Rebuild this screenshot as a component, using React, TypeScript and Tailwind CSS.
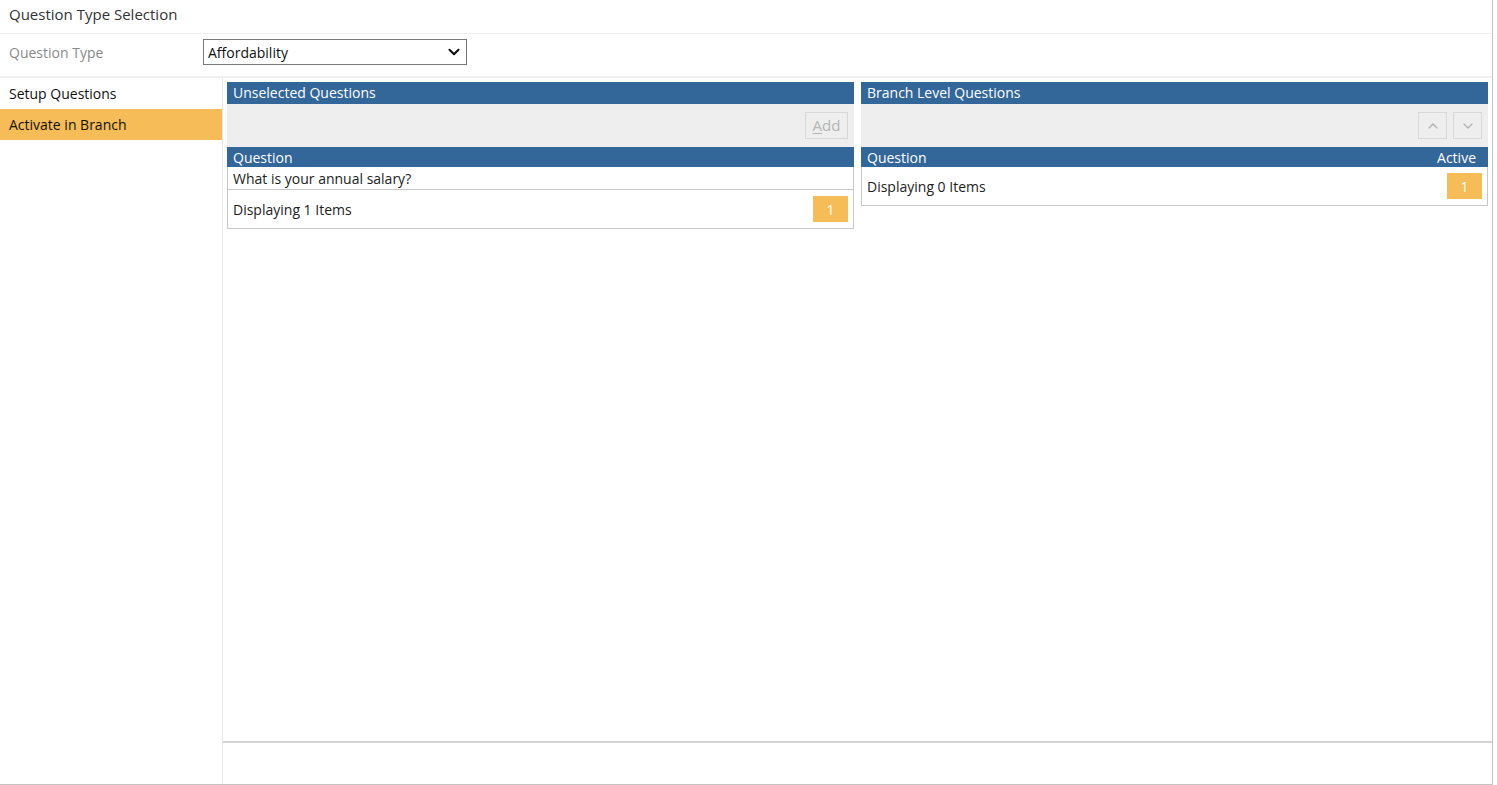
import { ChevronDown, ChevronUp } from "lucide-react";

const font = { fontFamily: '"Segoe UI", "Open Sans", "Noto Sans", sans-serif' };

function PanelHeader({ title }: { title: string }) {
  return (
    <div className="h-[22px] bg-[#336699] text-white text-[14px] pl-[6px] flex items-center leading-none">
      {title}
    </div>
  );
}

function Pager() {
  return (
    <div className="w-[35px] h-[26px] bg-[#f6bc57] text-white text-[14px] flex items-center justify-center">
      1
    </div>
  );
}

export default function App() {
  return (
    <div
      className="w-[1493px] h-[785px] bg-white border-r border-b border-[#c4c4c4] flex flex-col text-[#222]"
      style={font}
    >
      <div className="h-[34px] border-b border-[#f0f0f0] pl-[9px] pt-[3px] text-[15px] leading-[22px] text-[#333]">
        Question Type Selection
      </div>

      <div className="h-[44px] flex items-start pt-[5px] border-b-2 border-[#f0f0f0]">
        <div className="h-[26px] w-[203px] pl-[9px] text-[14px] text-[#8a8a8a] flex items-center">Question Type</div>
        <div className="w-[264px] h-[26px] border border-[#7a7a7a] flex items-center justify-between pl-[4px] pr-[3px] text-[14px] text-[#111]">
          <span>Affordability</span>
          <ChevronDown className="w-[18px] h-[18px]" strokeWidth={2.8} />
        </div>
      </div>

      <div className="flex-1 flex min-h-0">
        <div className="w-[223px] border-r border-[#e8e8e8] text-[14px]">
          <div className="h-[31px] pl-[9px] flex items-center text-[#111]">Setup Questions</div>
          <div className="h-[31px] pl-[9px] flex items-center bg-[#f6bc57] text-[#111]">
            Activate in Branch
          </div>
        </div>

        <div className="flex-1 flex flex-col">
          <div className="flex-1 flex gap-[7px] pt-[4px] pl-[4px] pr-[4px]">
            <div className="w-[627px] self-start">
              <PanelHeader title="Unselected Questions" />
              <div className="h-[43px] bg-[#eeeeee] flex items-center justify-end pr-[6px]">
                <div className="w-[43px] h-[27px] border border-[#d8d8d8] flex items-center justify-center text-[15px] text-[#b4b4b4]">
                  <span className="underline underline-offset-2">A</span>dd
                </div>
              </div>
              <div className="h-[20px] bg-[#336699] text-white text-[14px] pl-[6px] flex items-center">
                Question
              </div>
              <div className="border-x border-b border-[#c8c8c8] text-[14px]">
                <div className="h-[23px] border-b border-[#c8c8c8] pl-[5px] flex items-center">
                  What is your annual salary?
                </div>
                <div className="h-[38px] pl-[5px] pr-[5px] flex items-center justify-between">
                  <span>Displaying 1 Items</span>
                  <Pager />
                </div>
              </div>
            </div>

            <div className="w-[627px] self-start">
              <PanelHeader title="Branch Level Questions" />
              <div className="h-[43px] bg-[#eeeeee] flex items-center justify-end gap-[6px] pr-[6px]">
                <div className="w-[29px] h-[27px] border border-[#d8d8d8] flex items-center justify-center text-[#b0b0b0]">
                  <ChevronUp className="w-[16px] h-[16px]" strokeWidth={1.8} />
                </div>
                <div className="w-[29px] h-[27px] border border-[#d8d8d8] flex items-center justify-center text-[#b0b0b0]">
                  <ChevronDown className="w-[16px] h-[16px]" strokeWidth={1.8} />
                </div>
              </div>
              <div className="h-[20px] bg-[#336699] text-white text-[14px] pl-[6px] pr-[12px] flex items-center justify-between">
                <span>Question</span>
                <span>Active</span>
              </div>
              <div className="border-x border-b border-[#c8c8c8] text-[14px]">
                <div className="h-[38px] pl-[5px] pr-[5px] flex items-center justify-between">
                  <span>Displaying 0 Items</span>
                  <Pager />
                </div>
              </div>
            </div>
          </div>

          <div className="h-[43px] border-t-2 border-[#d4d4d4]" />
        </div>
      </div>
    </div>
  );
}
